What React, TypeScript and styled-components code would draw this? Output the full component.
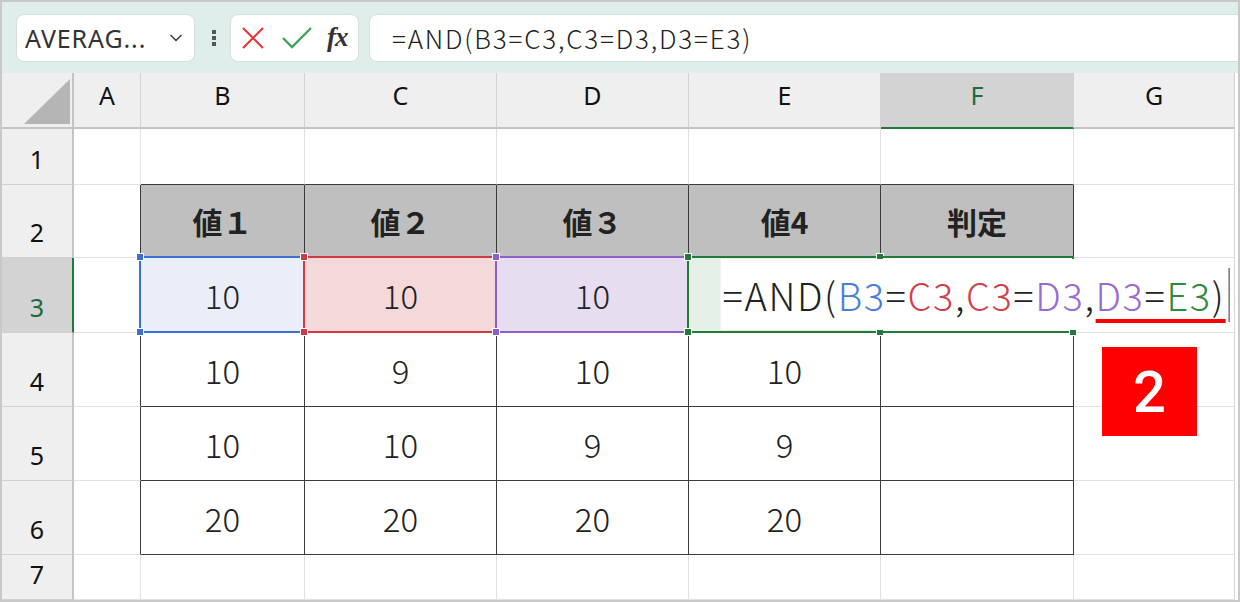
import styled, { createGlobalStyle } from "styled-components";
import { ChevronDown } from "lucide-react";

const GlobalStyle = createGlobalStyle`
  html, body {
    margin: 0;
    padding: 0;
    background: #fff;
  }
  body {
    font-family: "Noto Sans", "Noto Sans CJK JP", sans-serif;
  }
  * {
    box-sizing: border-box;
  }
`;

const COLS = [72, 67, 164, 192, 192, 192, 193, 161];
const ROWS = [56, 56, 73, 75, 74, 74, 74, 45];
const GRID = "#e1e1e1";
const DARK = "#3a3a3a";
const GREEN = "#217a3a";

const Frame = styled.div`
  width: 1240px;
  height: 602px;
  border: 2px solid #c9c9c9;
  display: flex;
  flex-direction: column;
  overflow: hidden;
  background: #fff;
`;

const Toolbar = styled.div`
  height: 71px;
  flex-shrink: 0;
  background: #e0eeeb;
  display: flex;
  align-items: center;
  padding-left: 14px;
  overflow: hidden;
`;

const NameBox = styled.div`
  width: 179px;
  height: 48px;
  flex-shrink: 0;
  background: #fff;
  border: 1px solid #d8dedc;
  border-radius: 8px;
  display: flex;
  align-items: center;
  justify-content: space-between;
  padding: 0 8px 0 8px;
  font-family: "Noto Sans", sans-serif;
  font-size: 25px;
  letter-spacing: 0.9px;
  color: #333;
`;

const Dots = styled.svg`
  margin: 0 13px 0 16px;
  flex-shrink: 0;
`;

const IconBox = styled.div`
  width: 129px;
  height: 48px;
  flex-shrink: 0;
  background: #fff;
  border: 1px solid #d8dedc;
  border-radius: 8px;
  display: flex;
  align-items: center;
  padding-left: 10px;
  gap: 17px;
`;

const Fx = styled.span`
  font-family: "Liberation Serif", "DejaVu Serif", serif;
  font-style: italic;
  font-weight: 700;
  font-size: 27px;
  color: #333;
  letter-spacing: -1px;
  margin-left: -2px;
`;

const FormulaBox = styled.div`
  width: 880px;
  height: 48px;
  flex-shrink: 0;
  margin-left: 10px;
  background: #fff;
  border: 1px solid #d8dedc;
  border-radius: 8px;
  display: flex;
  align-items: center;
  padding-left: 22px;
  font-family: "Noto Sans CJK JP", "Noto Sans", sans-serif;
  font-size: 26px;
  font-weight: 300;
  letter-spacing: 1.8px;
  color: #222;
`;

const Sheet = styled.div`
  position: relative;
  display: grid;
  grid-template-columns: ${COLS.map((c) => c + "px").join(" ")};
  grid-template-rows: ${ROWS.map((r) => r + "px").join(" ")};
`;

const HeadBase = styled.div<{ $active?: boolean }>`
  background: ${(p) => (p.$active ? "#d3d3d3" : "#efefef")};
  color: ${(p) => (p.$active ? "#1d6b36" : "#111")};
  font-family: "Noto Sans", sans-serif;
  font-size: 25px;
  display: flex;
  justify-content: center;
`;

const Corner = styled(HeadBase)`
  position: relative;
  border-right: 2px solid #c4c4c4;
  border-bottom: 2px solid #c4c4c4;

  &::after {
    content: "";
    position: absolute;
    left: 22px;
    top: 6px;
    width: 46px;
    height: 45px;
    background: #b5b5b5;
    clip-path: polygon(100% 0, 100% 100%, 0 100%);
  }
`;

const ColHead = styled(HeadBase)`
  align-items: flex-start;
  padding-top: 5px;
  border-right: 1px solid #d2d2d2;
  border-bottom: 2px solid ${(p) => (p.$active ? GREEN : "#c4c4c4")};
`;

const RowHead = styled(HeadBase)`
  align-items: flex-end;
  padding-bottom: 8px;
  border-bottom: 1px solid #d2d2d2;
  border-right: 2px solid ${(p) => (p.$active ? GREEN : "#c4c4c4")};
`;

const Cell = styled.div<{
  $right: string;
  $bottom: string;
  $bg?: string;
  $head?: boolean;
}>`
  position: relative;
  border-right: 1px solid ${(p) => p.$right};
  border-bottom: 1px solid ${(p) => p.$bottom};
  background: ${(p) => p.$bg ?? "transparent"};
  display: flex;
  align-items: center;
  justify-content: center;
  font-family: "Noto Sans CJK JP", sans-serif;
  font-size: ${(p) => (p.$head ? "30px" : "33px")};
  font-weight: ${(p) => (p.$head ? 700 : 300)};
  color: #222;
`;

const Range = styled.div<{ $color: string }>`
  position: absolute;
  top: -2px;
  left: -2px;
  right: -1px;
  bottom: -1px;
  border: 2px solid ${(p) => p.$color};
  z-index: 1;
  pointer-events: none;
`;

const Handle = styled.span<{ $color: string; $x: "l" | "r"; $y: "t" | "b" }>`
  position: absolute;
  width: 8px;
  height: 8px;
  background: ${(p) => p.$color};
  border: 1px solid #fff;
  ${(p) => (p.$x === "l" ? "left: -5px;" : "right: -5px;")}
  ${(p) => (p.$y === "t" ? "top: -5px;" : "bottom: -5px;")}
`;

const EditBox = styled.div`
  position: absolute;
  top: 1px;
  bottom: 2px;
  left: 50%;
  transform: translateX(-50%);
  z-index: 2;
  background: #fff;
  display: flex;
  align-items: center;
  padding: 0 4px 0 2px;
  white-space: nowrap;
  font-family: "Noto Sans CJK JP", sans-serif;
  font-size: 38px;
  font-weight: 300;
  letter-spacing: 1.6px;
  color: #222;
`;

const Ref = styled.span<{ $color: string }>`
  color: ${(p) => p.$color};
`;

const Marked = styled.span`
  position: relative;

  &::after {
    content: "";
    position: absolute;
    left: 0;
    right: 0;
    bottom: -1px;
    height: 4px;
    background: #ff0000;
  }
`;

const Caret = styled.span`
  display: inline-block;
  width: 1px;
  height: 54px;
  background: #333;
  margin-left: 3px;
`;

const Badge = styled.div`
  position: absolute;
  left: 1100px;
  top: 274px;
  width: 95px;
  height: 89px;
  z-index: 3;
  background: #ff0000;
  color: #fff;
  display: flex;
  align-items: center;
  justify-content: center;
  font-family: "Roboto", "Liberation Sans", sans-serif;
  font-weight: 500;
  font-size: 58px;
`;

const LETTERS = ["A", "B", "C", "D", "E", "F", "G"];
const HEADERS = ["値１", "値２", "値３", "値4", "判定"];
const DATA: Record<number, string[]> = {
  4: ["10", "9", "10", "10", ""],
  5: ["10", "10", "9", "9", ""],
  6: ["20", "20", "20", "20", ""],
};

const BLUE = "#3b6fd4";
const RED = "#cf3a45";
const PURPLE = "#8d5fc8";

function RangeBox({ color }: { color: string }) {
  return (
    <Range $color={color}>
      <Handle $color={color} $x="l" $y="t" />
      <Handle $color={color} $x="r" $y="t" />
      <Handle $color={color} $x="l" $y="b" />
      <Handle $color={color} $x="r" $y="b" />
    </Range>
  );
}

function Formula() {
  return (
    <>
      =AND(<Ref $color="#4a7fd9">B3</Ref>=<Ref $color="#d23f4b">C3</Ref>,
      <Ref $color="#d23f4b">C3</Ref>=<Ref $color="#9a6ad6">D3</Ref>,
      <Marked>
        <Ref $color="#9a6ad6">D3</Ref>=<Ref $color="#2e8b3e">E3</Ref>)
      </Marked>
    </>
  );
}

function bodyCell(row: number, col: number) {
  // col: 1 = A ... 7 = G
  const inTable = row >= 2 && row <= 6 && col >= 2 && col <= 6;
  const right = inTable || (col === 1 && row >= 2 && row <= 6) ? DARK : GRID;
  const bottom = inTable || (row === 1 && col >= 2 && col <= 6) ? DARK : GRID;
  const key = `${row}-${col}`;
  const lastRight = col === 7 ? "#d6d6d6" : right;

  if (row === 2 && inTable) {
    return (
      <Cell key={key} $right={right} $bottom={bottom} $bg="#bfbfbf" $head>
        {HEADERS[col - 2]}
      </Cell>
    );
  }

  if (row === 3 && inTable) {
    if (col === 2)
      return (
        <Cell key={key} $right={right} $bottom={bottom} $bg="#e9eef8">
          10
          <RangeBox color={BLUE} />
        </Cell>
      );
    if (col === 3)
      return (
        <Cell key={key} $right={right} $bottom={bottom} $bg="#f5d8da">
          10
          <RangeBox color={RED} />
        </Cell>
      );
    if (col === 4)
      return (
        <Cell key={key} $right={right} $bottom={bottom} $bg="#e6ddf1">
          10
          <RangeBox color={PURPLE} />
        </Cell>
      );
    if (col === 5)
      return (
        <Cell key={key} $right={right} $bottom={bottom} $bg="#e5f0e7">
          <RangeBox color={GREEN} />
        </Cell>
      );
    return (
      <Cell key={key} $right={right} $bottom={bottom}>
        <Range $color={GREEN}>
          <Handle $color={GREEN} $x="r" $y="b" />
        </Range>
        <EditBox>
          <Formula />
          <Caret />
        </EditBox>
      </Cell>
    );
  }

  const value = inTable && DATA[row] ? DATA[row][col - 2] : "";
  return (
    <Cell key={key} $right={lastRight} $bottom={bottom}>
      {value}
    </Cell>
  );
}

export default function App() {
  return (
    <>
      <GlobalStyle />
      <Frame>
        <Toolbar>
          <NameBox>
            <span>AVERAG...</span>
            <ChevronDown size={20} color="#444" strokeWidth={2} />
          </NameBox>
          <Dots width="6" height="18" viewBox="0 0 6 18">
            <rect x="1" y="1" width="4" height="4" fill="#555" />
            <rect x="1" y="7" width="4" height="4" fill="#555" />
            <rect x="1" y="13" width="4" height="4" fill="#555" />
          </Dots>
          <IconBox>
            <svg width="24" height="24" viewBox="0 0 24 24">
              <path
                d="M2 2 L22 22 M22 2 L2 22"
                stroke="#e5393b"
                strokeWidth="2.2"
                fill="none"
              />
            </svg>
            <svg width="30" height="24" viewBox="0 0 30 24">
              <path
                d="M1 12 L10 21 L29 2"
                stroke="#3ea35b"
                strokeWidth="2.4"
                fill="none"
              />
            </svg>
            <Fx>fx</Fx>
          </IconBox>
          <FormulaBox>=AND(B3=C3,C3=D3,D3=E3)</FormulaBox>
        </Toolbar>
        <Sheet>
          <Corner />
          {LETTERS.map((l) => (
            <ColHead key={l} $active={l === "F"}>
              {l}
            </ColHead>
          ))}
          {[1, 2, 3, 4, 5, 6, 7].map((row) => (
            <RowFragment key={row} row={row} />
          ))}
          <Badge>2</Badge>
        </Sheet>
      </Frame>
    </>
  );
}

function RowFragment({ row }: { row: number }) {
  return (
    <>
      <RowHead $active={row === 3}>{row}</RowHead>
      {[1, 2, 3, 4, 5, 6, 7].map((col) => bodyCell(row, col))}
    </>
  );
}
